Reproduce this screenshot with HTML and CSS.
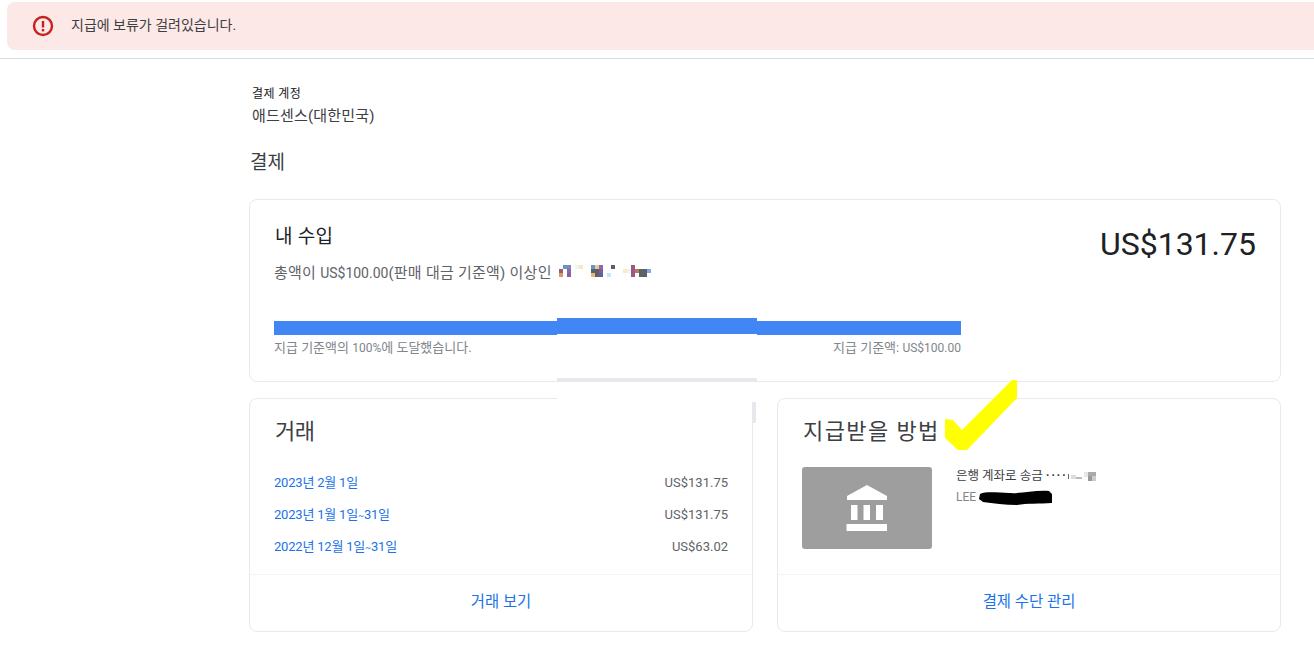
FILE: index.html
```html
<!DOCTYPE html>
<html lang="ko">
<head>
<meta charset="utf-8">
<title>결제</title>
<link rel="stylesheet" href="styles.css">
</head>
<body>
<div class="topbar">
  <div class="banner">
    <svg class="alert-icon" viewBox="0 0 24 24" width="24" height="24"><circle cx="12" cy="12" r="9" fill="none" stroke="#c5221f" stroke-width="2.400"/><rect x="10.800" y="7" width="2.400" height="6.500" fill="#c5221f"/><rect x="10.800" y="15" width="2.400" height="2.400" fill="#c5221f"/></svg>
    <span class="banner-text">지급에 보류가 걸려있습니다.</span>
  </div>
</div>
<main class="main">
  <div class="account-label">결제 계정</div>
  <div class="account-name">애드센스(대한민국)</div>
  <h1 class="page-title">결제</h1>

  <section class="card earnings">
    <div class="earnings-top">
      <div>
        <h2 class="earnings-title">내 수입</h2>
        <div class="earnings-desc"><span>총액이 <span class="num14">US$100.00</span>(판매 대금 기준액) 이상인</span>
          <svg class="mosaic" width="92" height="12" viewBox="0 0 92 12" shape-rendering="crispEdges">
            <rect x="0" y="4" width="4" height="4" fill="#9c5a6e"/><rect x="0" y="8" width="4" height="4" fill="#d39a6c"/><rect x="4" y="0" width="4" height="4" fill="#5f97d0"/><rect x="4" y="4" width="4" height="8" fill="#fff"/><rect x="8" y="0" width="4" height="4" fill="#8a7fbb"/><rect x="8" y="4" width="4" height="4" fill="#8a6aa8"/><rect x="8" y="8" width="4" height="4" fill="#8a5fa0"/>
            <rect x="16" y="0" width="4" height="4" fill="#e6f7fb"/><rect x="20" y="0" width="4" height="4" fill="#ffe6b8"/>
            <rect x="32" y="0" width="4" height="4" fill="#5f97d0"/><rect x="36" y="0" width="4" height="4" fill="#f6c69a"/><rect x="40" y="0" width="4" height="4" fill="#8a6aa8"/><rect x="32" y="4" width="8" height="4" fill="#5d6066"/><rect x="40" y="4" width="4" height="4" fill="#7d5f98"/><rect x="32" y="8" width="4" height="4" fill="#eeb37e"/><rect x="36" y="8" width="4" height="4" fill="#5d6066"/><rect x="40" y="8" width="4" height="4" fill="#5a62a0"/>
            <rect x="48" y="8" width="4" height="4" fill="#bfe6fb"/><rect x="52" y="0" width="4" height="4" fill="#5d6066"/>
            <rect x="64" y="4" width="4" height="4" fill="#ffe9bd"/><rect x="68" y="4" width="4" height="4" fill="#e6f7fb"/><rect x="72" y="0" width="4" height="12" fill="#9c5a80"/><rect x="76" y="4" width="4" height="4" fill="#b87a62"/><rect x="80" y="4" width="8" height="8" fill="#5d6066"/><rect x="88" y="4" width="4" height="4" fill="#7ea9e6"/>
          </svg>
        </div>
      </div>
      <div class="earnings-amount">US$131.75</div>
    </div>
    <div class="progress"><div class="progress-fill"></div></div>
    <div class="progress-labels">
      <span>지급 기준액의 <span class="num12">100%</span>에 도달했습니다.</span>
      <span>지급 기준액: <span class="num12">US$100.00</span></span>
    </div>
  </section>

  <div class="columns">
    <section class="card column">
      <div class="column-body">
        <h2 class="column-title title-short">거래</h2>
        <ul class="tx-list">
          <li class="tx-row"><a class="link" href="#">2023년 2월 1일</a><span class="tx-amount">US$131.75</span></li>
          <li class="tx-row"><a class="link" href="#">2023년 1월 1일<span class="tilde">~</span>31일</a><span class="tx-amount">US$131.75</span></li>
          <li class="tx-row"><a class="link" href="#">2022년 12월 1일<span class="tilde">~</span>31일</a><span class="tx-amount">US$63.02</span></li>
        </ul>
      </div>
      <a class="card-action" href="#">거래 보기</a>
    </section>
    <section class="card column">
      <div class="column-body">
        <h2 class="column-title title-wide">지급받을 방법</h2>
        <div class="pay-method">
          <div class="bank-tile">
            <svg viewBox="0 0 42 46" width="42" height="46"><path fill="#fff" d="M21 0 41 11v4H1v-4zM5 20h6.500v15H5zM17.500 20H24v15h-6.500zM30 20h7v15h-7zM.5 39H41v7H.5z"/></svg>
          </div>
          <div class="pay-info">
            <div class="pay-line">은행 계좌로 송금 <span class="dots">····</span><svg class="mosaic-small" width="28" height="9" viewBox="0 0 28 9" shape-rendering="crispEdges"><rect x="0" y="2" width="1" height="5" fill="#666"/><rect x="3" y="3" width="5" height="4" fill="#ddd"/><rect x="8" y="5" width="6" height="2" fill="#bbb"/><rect x="16" y="0" width="4" height="5" fill="#e6e6e6"/><rect x="20" y="0" width="8" height="4" fill="#aaa"/><rect x="20" y="4" width="4" height="5" fill="#999"/><rect x="24" y="4" width="4" height="5" fill="#ccc"/></svg></div>
            <div class="pay-name">LEE</div>
          </div>
        </div>
      </div>
      <a class="card-action" href="#">결제 수단 관리</a>
    </section>
  </div>
</main>

<div class="patch">
  <div class="patch-blue"></div>
  <div class="patch-grey"></div>
</div>
<div class="patch-tick"></div>
<svg class="check" width="76" height="72" viewBox="0 0 76 72"><polygon points="1,40 9,41 18,51 68,1 73,1 73,19 23,71 14,71 1,59" fill="#ffff00"/></svg>
<svg class="scribble" width="74" height="16" viewBox="0 0 74 16"><path d="M1 4 C8 1 20 3 30 3 C42 4 55 0 70 1 L73 4 L73 13 C60 14 48 13 38 15 C26 15 14 13 4 12 L0 9 Z" fill="#000"/></svg>
</body>
</html>
```
FILE: styles.css
```css
* { box-sizing: border-box; }
html, body { margin: 0; padding: 0; }
body {
  width: 1314px;
  height: 646px;
  overflow: hidden;
  position: relative;
  background: #fff;
  color: #3c4043;
  font-family: Roboto, "Noto Sans CJK KR", sans-serif;
}
.topbar {
  height: 59px;
  padding: 2px 0 8px 7px;
  border-bottom: 1px solid #dadce0;
}
.banner {
  height: 48px;
  display: flex;
  align-items: center;
  padding-left: 24px;
  background: #fce8e6;
  border-radius: 8px 0 0 8px;
}
.alert-icon { flex: none; margin-right: 16px; }
.banner-text { font-size: 14px; line-height: 20px; margin-top: -3px; color: #3c4043; }
.main { padding: 28px 33px 0 249px; }
.account-label { font-size: 12px; line-height: 14px; letter-spacing: .4px; color: #202124; padding-left: 3px; }
.account-name { font-size: 15px; line-height: 20px; margin-top: 5px; padding-left: 3px; letter-spacing: .2px; color: #3c4043; }
.page-title { margin: 23px 0 0; padding-left: 1px; font-size: 19px; line-height: 28px; font-weight: 400; color: #3c4043; }
.card { border: 1px solid #e8eaed; border-radius: 8px; background: #fff; }
.earnings { margin-top: 22px; height: 183px; padding: 25px 24px 0; }
.earnings-top { display: flex; justify-content: space-between; height: 96px; }
.earnings-title { margin: 0; padding-left: 1px; font-size: 19px; line-height: 24px; letter-spacing: .3px; font-weight: 400; color: #202124; }
.earnings-desc { margin-top: 14px; font-size: 15px; line-height: 20px; letter-spacing: .25px; color: #5f6368; display: flex; align-items: center; gap: 7px; }
.num14 { font-size: 14px; letter-spacing: 0; }
.num12 { font-size: 12px; }
.mosaic { flex: none; margin-bottom: 4px; }
.earnings-amount { font-size: 32px; line-height: 40px; margin-top: -1px; color: #202124; }
.progress { width: 687px; height: 14px; background: #e8eaed; }
.progress-fill { width: 100%; height: 100%; background: #4285f4; }
.progress-labels { width: 687px; display: flex; justify-content: space-between; margin-top: 5px; font-size: 13px; line-height: 16px; color: #80868b; }
.columns { display: flex; gap: 24px; margin-top: 16px; }
.column { flex: 1; height: 234px; display: flex; flex-direction: column; }
.column-body { flex: 1; padding: 18px 24px 0; }
.column-title { margin: 0; padding-left: 1px; font-size: 22px; line-height: 30px; font-weight: 400; color: #3c4043; }
.title-short { letter-spacing: -.6px; }
.title-wide { letter-spacing: 1.4px; }
.tx-list { list-style: none; margin: 18px 0 0; padding: 0; }
.tx-row { display: flex; justify-content: space-between; height: 32px; align-items: center; font-size: 13px; color: #5f6368; }
.tx-amount { padding-top: 2px; }
.link { color: #1a73e8; text-decoration: none; letter-spacing: -.2px; }
.tilde { font-size: 9px; }
.card-action { height: 57px; padding-bottom: 6px; display: flex; align-items: center; justify-content: center; border-top: 1px solid #f1f3f4; color: #1a73e8; font-size: 15.400px; text-decoration: none; }
.pay-method { display: flex; gap: 24px; margin-top: 20px; }
.bank-tile { width: 130px; height: 82px; background: #9e9e9e; border-radius: 3px; display: flex; align-items: center; justify-content: center; }
.pay-info { font-size: 12px; color: #5f6368; padding-top: 1px; }
.pay-line { font-size: 12.500px; line-height: 16px; color: #3c4043; display: flex; align-items: center; white-space: pre; }
.dots { font-weight: 700; letter-spacing: 1.600px; margin-right: 1px; }
.pay-name { line-height: 16px; margin-top: 5px; color: #80868b; }
.patch { position: absolute; left: 557px; top: 318px; width: 200px; height: 90px; background: #fff; }
.patch-blue { height: 16px; background: #4285f4; }
.patch-grey { height: 4px; margin-top: 44px; background: #e8e8ec; }
.patch-tick { position: absolute; left: 752px; top: 402px; width: 4px; height: 21px; background: #e8e8ec; }
.check { position: absolute; left: 944px; top: 379px; }
.scribble { position: absolute; left: 979px; top: 490px; }
```
